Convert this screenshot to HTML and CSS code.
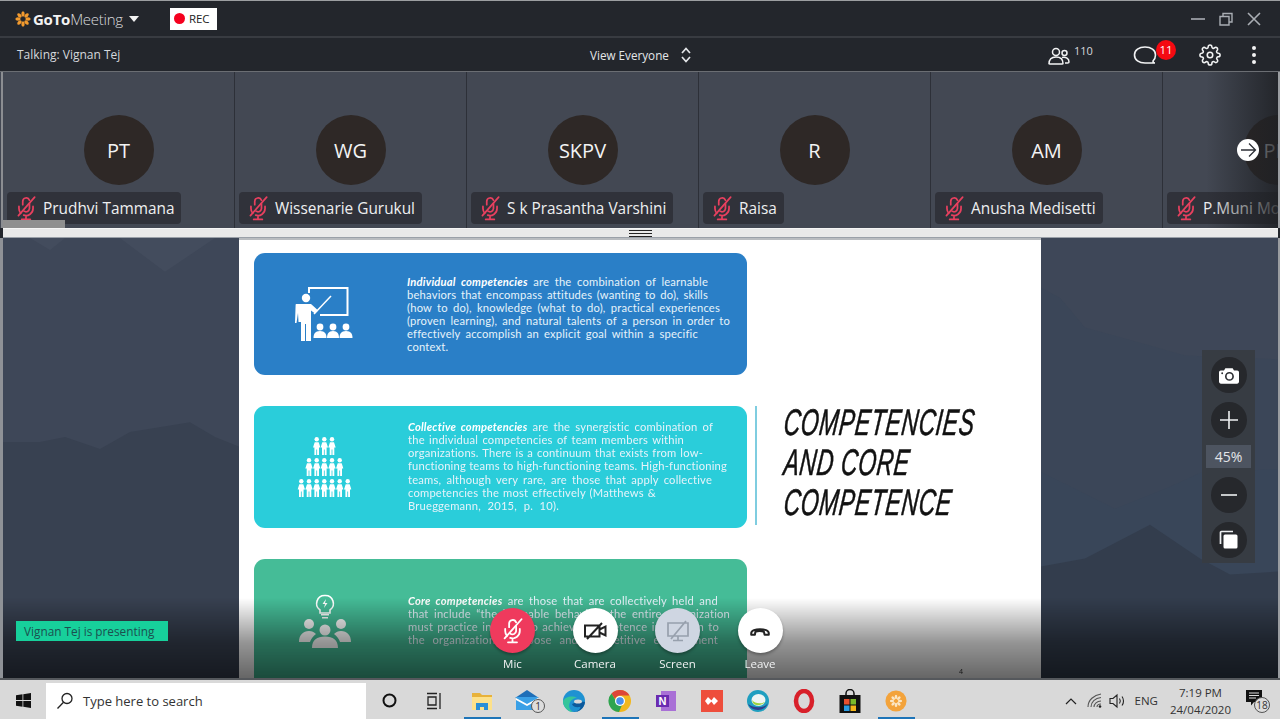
FILE: index.html
```html
<!DOCTYPE html>
<html lang="en">
<head>
<meta charset="utf-8">
<title>GoToMeeting</title>
<link rel="stylesheet" href="styles.css">
</head>
<body>
<svg class="defs" width="0" height="0" aria-hidden="true">
  <defs>
    <symbol id="micoff" viewBox="0 0 24 24">
      <g fill="none" stroke="currentColor" stroke-width="1.6" stroke-linecap="round">
        <path d="M9 9V6a3.2 3.2 0 0 1 6.2-1.2M15.2 8v4.500a3.2 3.2 0 0 1-5 2.400"/>
        <path d="M5.500 10.500v2a6.500 6.500 0 0 0 1.600 4.300M18.500 10.500v2a6.500 6.500 0 0 1-8.600 6.100M12 19v3M8 22.500h8"/>
        <path d="M5 19 20 2"/>
      </g>
    </symbol>
    <symbol id="flower" viewBox="0 0 24 24">
      <g fill="currentColor">
        <ellipse cx="12" cy="4.500" rx="2.500" ry="4"/>
        <ellipse cx="12" cy="19.500" rx="2.500" ry="4"/>
        <ellipse cx="4.500" cy="12" rx="4" ry="2.500"/>
        <ellipse cx="19.500" cy="12" rx="4" ry="2.500"/>
        <ellipse cx="6.700" cy="6.700" rx="2.500" ry="4" transform="rotate(-45 6.700 6.700)"/>
        <ellipse cx="17.300" cy="6.700" rx="2.500" ry="4" transform="rotate(45 17.300 6.700)"/>
        <ellipse cx="6.700" cy="17.300" rx="2.500" ry="4" transform="rotate(45 6.700 17.300)"/>
        <ellipse cx="17.300" cy="17.300" rx="2.500" ry="4" transform="rotate(-45 17.300 17.300)"/>
      </g>
    </symbol>
    <symbol id="person" viewBox="0 0 8 18">
      <circle cx="4" cy="2.300" r="2.200" fill="#fff"/>
      <path fill="#fff" d="M2 5.200h4l1.700 5.300H6.300V18H4.400v-5.500h-.8V18H1.700V10.500H.3z"/>
    </symbol>
  </defs>
</svg>

<div class="app">
  <header class="titlebar">
    <svg class="logo"><use href="#flower"/></svg>
    <span class="brand"><b>GoTo</b>Meeting</span>
    <span class="caret"></span>
    <span class="rec"><i class="rec-dot"></i>REC</span>
    <span class="winctl">
      <svg width="16" height="16" viewBox="0 0 16 16"><path d="M1 8h14" stroke="#a9adb3" stroke-width="1.6"/></svg>
      <svg width="16" height="16" viewBox="0 0 16 16" fill="none" stroke="#a9adb3" stroke-width="1.4"><path d="M2 5.500h9v8.500H2zM5 5.500V2.500h9V11h-3"/></svg>
      <svg width="16" height="16" viewBox="0 0 16 16"><path d="M2 2l12 12M14 2 2 14" stroke="#a9adb3" stroke-width="1.6"/></svg>
    </span>
  </header>

  <div class="subbar">
    <span class="talking">Talking: Vignan Tej</span>
    <span class="view">View Everyone
      <svg width="12" height="18" viewBox="0 0 12 18" fill="none" stroke="#e4e6e9" stroke-width="1.7"><path d="M2 7l4-4.500L10 7M2 11l4 4.500 4-4.500"/></svg>
    </span>
    <span class="people">
      <svg width="22" height="18" viewBox="0 0 22 18" fill="none" stroke="#f2f3f4" stroke-width="1.5"><circle cx="8" cy="5" r="3.500"/><circle cx="16.500" cy="6" r="2.500"/><path d="M1 17c0-5 3-7 7-7s7 2 7 6.500c0 .5-.3.5-1 .5H2c-.6 0-1 0-1-.5zM14 10.500c4-.8 7 1 7 4.500 0 1-.5 1-1.500 1H17"/></svg>
      <sup>110</sup>
    </span>
    <span class="chat">
      <svg width="24" height="20" viewBox="0 0 24 20" fill="none" stroke="#f2f3f4" stroke-width="1.6"><path d="M20 16c1.500-1.500 2.500-3.500 2.500-6C22.500 5 18 2 12 2S1.500 5 1.500 10s4.500 8 10.500 8h10c-1 0-2-.7-2-2z"/></svg>
      <b class="badge">11</b>
    </span>
    <svg class="gear" width="22" height="22" viewBox="0 0 24 24" fill="none" stroke="#f2f3f4" stroke-width="1.700" stroke-linejoin="round"><circle cx="12" cy="12" r="3"/><path d="M19.400 15a1.650 1.650 0 0 0 .33 1.820l.06.06a2 2 0 0 1 0 2.830 2 2 0 0 1-2.830 0l-.06-.06a1.650 1.650 0 0 0-1.820-.33 1.650 1.650 0 0 0-1 1.510V21a2 2 0 0 1-2 2 2 2 0 0 1-2-2v-.09A1.650 1.650 0 0 0 9 19.400a1.650 1.650 0 0 0-1.820.33l-.06.06a2 2 0 0 1-2.830 0 2 2 0 0 1 0-2.830l.06-.06a1.650 1.650 0 0 0 .33-1.820 1.650 1.650 0 0 0-1.510-1H3a2 2 0 0 1-2-2 2 2 0 0 1 2-2h.09A1.650 1.650 0 0 0 4.600 9a1.650 1.650 0 0 0-.33-1.820l-.06-.06a2 2 0 0 1 0-2.830 2 2 0 0 1 2.830 0l.06.06a1.650 1.650 0 0 0 1.820.33H9a1.650 1.650 0 0 0 1-1.510V3a2 2 0 0 1 2-2 2 2 0 0 1 2 2v.09a1.650 1.650 0 0 0 1 1.510 1.650 1.650 0 0 0 1.820-.33l.06-.06a2 2 0 0 1 2.830 0 2 2 0 0 1 0 2.830l-.06.06a1.650 1.650 0 0 0-.33 1.820V9a1.650 1.650 0 0 0 1.510 1H21a2 2 0 0 1 2 2 2 2 0 0 1-2 2h-.09a1.650 1.650 0 0 0-1.510 1z"/></svg>
    <span class="kebab"><i></i><i></i><i></i></span>
  </div>

  <section class="strip">
    <article class="tile"><div class="avatar">PT</div><div class="nametag"><svg class="mic"><use href="#micoff"/></svg>Prudhvi Tammana</div></article>
    <article class="tile"><div class="avatar">WG</div><div class="nametag"><svg class="mic"><use href="#micoff"/></svg>Wissenarie Gurukul</div></article>
    <article class="tile"><div class="avatar">SKPV</div><div class="nametag"><svg class="mic"><use href="#micoff"/></svg>S k Prasantha Varshini</div></article>
    <article class="tile"><div class="avatar">R</div><div class="nametag"><svg class="mic"><use href="#micoff"/></svg>Raisa</div></article>
    <article class="tile"><div class="avatar">AM</div><div class="nametag"><svg class="mic"><use href="#micoff"/></svg>Anusha Medisetti</div></article>
    <article class="tile"><div class="avatar">PM</div><div class="nametag"><svg class="mic"><use href="#micoff"/></svg>P.Muni Mohan</div></article>
    <div class="fade"></div>
    <div class="next"><svg width="20" height="20" viewBox="0 0 20 20" fill="none" stroke="#2c2f36" stroke-width="1.300"><path d="M3 10h14M11 3.500 17.500 10 11 16.500"/></svg></div>
    <div class="thumb"></div>
  </section>

  <div class="splitter"><span class="grip"></span></div>

  <main class="stage">
    <svg class="mountains" viewBox="0 0 1280 442" preserveAspectRatio="none" aria-hidden="true">
      <rect width="1280" height="442" fill="#3e4758"/>
      <path d="M30 0 50 12 65 0ZM120 0 165 34 215 0Z" fill="#434c5d"/>
      <path d="M0 205 40 205 65 200 100 212 130 195 190 185 215 200 240 210V442H0Z" fill="#384151"/>
      <path d="M1041 50 1060 60 1085 90 1150 108 1185 118 1280 122V442H1041Z" fill="#3b4658"/>
      <path d="M1041 235 1115 272 1170 250 1200 236 1280 232V442H1041Z" fill="#394659"/>
      <path d="M1041 330 1085 322 1150 288 1200 322 1230 338 1280 335V442H1041Z" fill="#333d4d"/>
    </svg>
    <div class="slide">
      <div class="cards">
        <div class="card card-blue">
          <div class="card-icon">
            <svg width="60" height="54" viewBox="0 0 60 54" fill="#fff">
              <path fill="none" stroke="#fff" stroke-width="2" d="M14 6V1h38.500v27H25"/>
              <path fill="none" stroke="#fff" stroke-width="1.500" d="M19 27 36 9"/>
              <circle cx="11" cy="11" r="4.200"/>
              <path d="M1 17h15l5 4.500 2 2-3 3-4-3V54h-5V37h-1v17H6V35H3.500L3 26 1.500 36H0l.500-15C.7 18 .500 17 1 17z"/>
              <circle cx="25" cy="40" r="3.400"/><path d="M18.500 51c0-4 1.500-7 6.500-7s6.500 3 6.500 7z"/>
              <circle cx="38" cy="40" r="3.400"/><path d="M32 51c0-4 1.500-7 6-7s6 3 6 7z"/>
              <circle cx="51" cy="40" r="3.400"/><path d="M44.500 51c0-4 1.500-7 6.500-7s6.500 3 6.500 7z"/>
            </svg>
          </div>
          <p class="card-text"><span class="ln"><b>Individual competencies</b> are the combination of learnable</span><span class="ln">behaviors that encompass attitudes (wanting to do), skills</span><span class="ln">(how to do), knowledge (what to do), practical experiences</span><span class="ln">(proven learning), and natural talents of a person in order to</span><span class="ln">effectively accomplish an explicit goal within a specific</span><span class="ln">context.</span></p>
        </div>
        <div class="card card-cyan">
          <div class="card-icon">
            <svg width="56" height="62" viewBox="0 0 56 62">
              <use href="#person" x="15.700" y="2" width="8" height="18"/><use href="#person" x="23.300" y="2" width="8" height="18"/><use href="#person" x="31" y="2" width="8" height="18"/>
              <use href="#person" x="8" y="23" width="8" height="18"/><use href="#person" x="15.700" y="23" width="8" height="18"/><use href="#person" x="23.300" y="23" width="8" height="18"/><use href="#person" x="31" y="23" width="8" height="18"/><use href="#person" x="38.700" y="23" width="8" height="18"/>
              <use href="#person" x="0.300" y="44" width="8" height="18"/><use href="#person" x="8" y="44" width="8" height="18"/><use href="#person" x="15.700" y="44" width="8" height="18"/><use href="#person" x="23.300" y="44" width="8" height="18"/><use href="#person" x="31" y="44" width="8" height="18"/><use href="#person" x="38.700" y="44" width="8" height="18"/><use href="#person" x="46.700" y="44" width="8" height="18"/>
            </svg>
          </div>
          <p class="card-text"><span class="ln"><b>Collective competencies</b> are the synergistic combination of</span><span class="ln">the individual competencies of team members within</span><span class="ln">organizations. There is a continuum that exists from low-</span><span class="ln">functioning teams to high-functioning teams. High-functioning</span><span class="ln">teams, although very rare, are those that apply collective</span><span class="ln">competencies the most effectively (Matthews &amp;</span><span class="ln">Brueggemann, 2015, p. 10).</span></p>
        </div>
        <div class="card card-green">
          <div class="card-icon">
            <svg width="52" height="54" viewBox="0 0 52 54" fill="#fff">
              <path fill="none" stroke="#fff" stroke-width="1.600" d="M26 1.500a8 8 0 0 0-5 14.500v3h10v-3A8 8 0 0 0 26 1.500z"/>
              <path d="M27 5l-3.500 5H26l-1 4 3.500-5H26zM22 20h8v1.500h-8zM23 23h6v1.500h-6z"/>
              <circle cx="10" cy="30" r="5"/><circle cx="42" cy="30" r="5"/><circle cx="26" cy="36" r="5.500"/>
              <path d="M0 48c0-7 4-11 10-11 3 0 5 1 7 3-3 2-5 5-6 8zM52 48c0-7-4-11-10-11-3 0-5 1-7 3 3 2 5 5 6 8zM13 54c0-8 5-11.500 13-11.500S39 46 39 54z"/>
            </svg>
          </div>
          <p class="card-text"><span class="ln"><b>Core competencies</b> are those that are collectively held and</span><span class="ln">that include “the learnable behaviors the entire organization</span><span class="ln">must practice in order to achieve competence in relation to</span><span class="ln">the organization’s purpose and competitive environment</span></p>
        </div>
      </div>
      <h1 class="slide-title"><span>COMPETENCIES</span><span>AND CORE</span><span>COMPETENCE</span></h1>
      <span class="page-no">4</span>
    </div>

    <div class="shade"></div>
    <div class="presenting">Vignan Tej is presenting</div>

    <div class="controls">
      <div class="ctl"><span class="btn btn-mic"><svg width="27" height="27" color="#fff"><use href="#micoff"/></svg></span><label>Mic</label></div>
      <div class="ctl"><span class="btn"><svg width="26" height="26" viewBox="0 0 26 26" fill="none" stroke="#222" stroke-width="2"><path d="M3 7.500h14.500v11H3zM17.500 11.500l6-3v9l-6-3M5 21 20 5"/></svg></span><label>Camera</label></div>
      <div class="ctl"><span class="btn btn-screen"><svg width="26" height="26" viewBox="0 0 26 26" fill="none" stroke="#97a0ad" stroke-width="1.700"><path d="M3 5h20v13H3zM13 18v4M8 22.500h10M6 21 21 3"/></svg></span><label>Screen</label></div>
      <div class="ctl"><span class="btn"><svg width="24" height="24" viewBox="0 0 26 26" fill="none" stroke="#222" stroke-width="2.200" stroke-linejoin="round"><path d="M3.500 15.500c0-6 19-6 19 0v1.500h-4.500l-.8-3.200c-2.500-.8-6.700-.8-9.200 0L7.500 17H3.500z"/></svg></span><label>Leave</label></div>
    </div>

    <div class="zoompanel">
      <span class="zbtn"><svg width="20" height="17" viewBox="0 0 22 18"><path fill="#fff" d="M7 1h8l1.500 2.500H20a2 2 0 0 1 2 2V16a2 2 0 0 1-2 2H2a2 2 0 0 1-2-2V5.500a2 2 0 0 1 2-2h3.500z"/><circle cx="11.500" cy="10" r="4" fill="none" stroke="#2b2d31" stroke-width="1.800"/><circle cx="3.500" cy="6.500" r="1" fill="#2b2d31"/></svg></span>
      <span class="zbtn"><svg width="20" height="20" viewBox="0 0 20 20"><path d="M10 1v18M1 10h18" stroke="#eef0f2" stroke-width="1.600"/></svg></span>
      <span class="zlabel">45%</span>
      <span class="zbtn"><svg width="20" height="20" viewBox="0 0 20 20"><path d="M2 10h16" stroke="#eef0f2" stroke-width="1.600"/></svg></span>
      <span class="zbtn"><svg width="20" height="20" viewBox="0 0 20 20"><path d="M1.500 14V2.500a1 1 0 0 1 1-1H14" fill="none" stroke="#eef0f2" stroke-width="1.700"/><rect x="4.500" y="4.500" width="14" height="14" rx="1.500" fill="#fff"/></svg></span>
    </div>
  </main>
</div>

<footer class="taskbar">
  <span class="start"><svg width="15" height="15" viewBox="0 0 15 15" fill="#111"><path d="M0 2.200 6.500 1.300V7H0zM7.300 1.200 15 0v7H7.300zM0 8h6.500v5.700L0 12.800zM7.300 8H15v7l-7.700-1.200z"/></svg></span>
  <span class="search"><svg width="18" height="18" viewBox="0 0 18 18" fill="none" stroke="#222" stroke-width="1.300"><circle cx="11" cy="6.500" r="5"/><path d="M7.500 10.200 1.500 16.500"/></svg>Type here to search</span>
  <span class="tb-sys"><svg width="15" height="15" viewBox="0 0 15 15"><circle cx="7.500" cy="7.500" r="6" fill="none" stroke="#111" stroke-width="2"/></svg></span>
  <span class="tb-sys tb-view"><svg width="18" height="18" viewBox="0 0 18 18" fill="none" stroke="#222" stroke-width="1.300"><path d="M2 1.500h10M2 16.500h10M3 5h8v8H3zM15 1v16"/></svg></span>
  <span class="tb-app on"><svg width="24" height="22" viewBox="0 0 24 22"><path fill="#e8b23a" d="M2 3h8l2 2h10v15H2z"/><path fill="#fde18a" d="M2 7h20v13H2z"/><path fill="#2a8fd6" d="M6 20v-7h12v7h-4v-3h-4v3z"/></svg></span>
  <span class="tb-app"><svg width="26" height="24" viewBox="0 0 26 24"><path fill="#1f6fb8" d="M12 1 24 9H0z"/><path fill="#3aa0e6" d="M1 8h22v13H1z"/><path fill="#fff" d="M1 9l11 6 11-6v2l-11 6-11-6z"/></svg><i class="tb-count">1</i></span>
  <span class="tb-app"><svg width="24" height="24" viewBox="0 0 24 24"><circle cx="12" cy="12" r="11" fill="#1f92d2"/><path fill="#0d5a9c" d="M23 13a11 11 0 0 1-13 9.800c3 .7 8-1 8.500-5C15 19 11 18 10 15c2-1 9-3 13-2z"/><path fill="#35c59a" d="M1 12c0 6 5 11 10 11-3-2-4.500-5-3.500-8.500C8.500 11 12 9 15 9c-5-3-12-1-14 3z"/><ellipse cx="16" cy="12.500" rx="4" ry="2" fill="#d9d9d9"/></svg></span>
  <span class="tb-app on"><svg width="24" height="24" viewBox="0 0 24 24"><circle cx="12" cy="12" r="11" fill="#f2b71c"/><path fill="#dd4538" d="M12 1a11 11 0 0 1 9.500 5.500H12a5.500 5.500 0 0 0-5 3.500L3.500 4.500A11 11 0 0 1 12 1z"/><path fill="#2ea44f" d="M3.500 4.500 8 12a5 5 0 0 0 6 4l-3 7A11 11 0 0 1 3.500 4.500z"/><circle cx="12" cy="12" r="5" fill="#fff"/><circle cx="12" cy="12" r="3.800" fill="#4a8fe8"/></svg></span>
  <span class="tb-app"><svg width="22" height="22" viewBox="0 0 22 22"><rect x="6" y="1" width="15" height="20" fill="#a970d6"/><rect x="1" y="5" width="13" height="12" fill="#6a2bb0"/><text class="onenote" x="7.500" y="15">N</text></svg></span>
  <span class="tb-app"><svg width="24" height="24" viewBox="0 0 24 24"><rect x="1" y="1" width="22" height="22" fill="#ee4e3c"/><path fill="#fff" d="M8 8l4 4-4 4-3-4zM14 8l4 4-4 4-3-4z"/></svg></span>
  <span class="tb-app"><svg width="24" height="24" viewBox="0 0 24 24"><circle cx="12" cy="12" r="11" fill="#1f9fc0"/><path fill="#2d3f8f" d="M2 15a11 11 0 0 0 20-1c-3 5-13 6-20 1z"/><ellipse cx="12.500" cy="11" rx="7" ry="6" fill="#eef5f4"/><path fill="#9bd23c" d="M6 11c3 4 9 4 13 2-2 3-9 5-12 1z"/></svg></span>
  <span class="tb-app"><svg width="22" height="24" viewBox="0 0 22 24"><ellipse cx="11" cy="12" rx="8" ry="10" fill="none" stroke="#d8202a" stroke-width="4.500"/></svg></span>
  <span class="tb-app"><svg width="22" height="24" viewBox="0 0 22 24"><rect x="0.500" y="6" width="21" height="18" fill="#111"/><path d="M7 8V4.500a4 4 0 0 1 8 0V8" fill="none" stroke="#111" stroke-width="1.500"/><rect x="5" y="10" width="5.500" height="5.500" fill="#e9502e"/><rect x="11.500" y="10" width="5.500" height="5.500" fill="#7bbb2a"/><rect x="5" y="16.500" width="5.500" height="5.500" fill="#2a9be0"/><rect x="11.500" y="16.500" width="5.500" height="5.500" fill="#f5b719"/></svg></span>
  <span class="tb-app on"><svg width="22" height="24" viewBox="0 0 24 24"><circle cx="12" cy="12" r="11.500" fill="#f3a33b"/><svg x="5" y="5" width="14" height="14" color="#fbe6c4"><use href="#flower"/></svg></svg></span>

  <span class="tray">
    <svg width="14" height="14" viewBox="0 0 14 14" fill="none" stroke="#222" stroke-width="1.200"><path d="M2 10l5-5 5 5"/></svg>
    <svg class="t-wifi" width="16" height="16" viewBox="0 0 16 16" fill="none" stroke="#555" stroke-width="1.100"><path d="M1 14C1 7 7 2 14 1M4 14c0-5 4-9 10-9.500M7 14c0-3 3-6 7-6M10 14c0-2 1.500-3 4-3"/><circle cx="13" cy="13.500" r="1.300" fill="#222" stroke="none"/></svg>
    <svg class="t-vol" width="18" height="16" viewBox="0 0 18 16" fill="none" stroke="#222" stroke-width="1.100"><path d="M1 5.500h3L8 2v12l-4-3.500H1zM10.500 5.500c1 1.500 1 3.500 0 5M13 3.500c2 2.500 2 6.500 0 9"/></svg>
    <span class="eng">ENG</span>
    <span class="clock"><span>7:19 PM</span><span>24/04/2020</span></span>
    <span class="notif"><svg width="17" height="16" viewBox="0 0 17 16" fill="#111"><path d="M0 0h16v12H8l-3 3.500V12H0z"/><path d="M3 3h10M3 5.500h10M3 8h7" stroke="#ddd" stroke-width="1"/></svg><i class="notif-count">18</i></span>
  </span>
</footer>
</body>
</html>
```

FILE: styles.css
```css
* { box-sizing: border-box; }
html, body { margin: 0; padding: 0; height: 719px; overflow: hidden; background: #d9d9d9; }
body { font-family: "Open Sans", "Noto Sans", sans-serif; color: #fff; display: flex; flex-direction: column; }
.defs { position: absolute; }

.app { height: 680px; display: flex; flex-direction: column; background: #23262c; border-top: 1px solid #9c9ea1; border-bottom: 2px solid #55585c; overflow: hidden; flex: none; }

/* title bar */
.titlebar { height: 37px; flex: none; display: flex; align-items: center; padding: 0 15px; background: #23262c; border-bottom: 2px solid #383b41; }
.logo { width: 16px; height: 16px; color: #f29a2e; flex: none; }
.brand { margin-left: 2px; font-size: 15px; letter-spacing: -.25px; color: #d9dadc; font-weight: 300; }
.brand b { font-weight: 700; color: #f3f3f3; }
.caret { margin-left: 6px; width: 0; height: 0; border-left: 5.500px solid transparent; border-right: 5.500px solid transparent; border-top: 6px solid #f2f2f2; }
.rec { margin-left: 31px; width: 47px; height: 22px; background: #fff; display: flex; align-items: center; color: #222; font-size: 11.500px; padding-left: 4px; gap: 4px; }
.rec-dot { width: 11px; height: 11px; border-radius: 50%; background: #f5001e; }
.winctl { margin-left: auto; margin-right: 3px; display: flex; gap: 12px; align-items: center; }

/* sub bar */
.subbar { height: 34px; flex: none; display: flex; align-items: center; padding: 0 17px; background: #23262c; border-bottom: 1px solid #6b6e73; }
.talking { font-size: 12px; color: #d5d8dc; width: 573px; flex: none; }
.view { font-size: 11.700px; color: #e4e6e9; display: flex; align-items: center; gap: 11px; width: 458px; flex: none; }
.people { display: flex; align-items: flex-start; gap: 4px; width: 85px; flex: none; }
.people sup { font-size: 11px; line-height: 11px; color: #d5d8dc; margin-top: 0; }
.people svg { margin-top: 2px; }
.chat { position: relative; width: 66px; flex: none; display: flex; }
.badge { position: absolute; left: 23px; top: -5px; width: 20px; height: 20px; border-radius: 50%; background: #f50a12; font-weight: 400; font-size: 11.500px; line-height: 19px; text-align: center; }
.gear { flex: none; }
.kebab { margin-left: 31px; display: flex; flex-direction: column; gap: 3px; }
.kebab i { width: 4px; height: 4px; border-radius: 50%; background: #f2f3f4; }

/* participants */
.strip { height: 156px; flex: none; display: flex; position: relative; overflow: hidden; background: #434853; padding-left: 3px; border-right: 2px solid #9a9da1; }
.strip::before { content: ""; position: absolute; left: 1px; top: 0; bottom: 0; width: 2px; background: #8c8e92; z-index: 1; }
.tile { width: 232px; flex: none; height: 156px; display: flex; flex-direction: column; align-items: center; padding-top: 43px; background: #434853; border-right: 1px solid #2d3038; position: relative; }
.avatar { width: 70px; height: 70px; border-radius: 50%; background: #2e2826; color: #f3f3f3; display: flex; align-items: center; justify-content: center; font-size: 20px; padding-top: 1px; }
.nametag { position: absolute; left: 4px; top: 120px; height: 32px; padding: 0 7px 0 6px; display: flex; align-items: center; gap: 4px; background: #30323a; border-radius: 4px; font-size: 15.400px; font-weight: 500; color: #eeeff0; white-space: nowrap; }
.mic { width: 26px; height: 26px; color: #e8405f; flex: none; }
.fade { position: absolute; right: 0; top: 0; bottom: 0; width: 72px; background: linear-gradient(90deg, rgba(35,37,42,0), rgba(30,32,36,.85)); }
.next { position: absolute; left: 1237px; top: 67px; width: 22px; height: 22px; border-radius: 50%; background: #fff; display: flex; align-items: center; justify-content: center; }
.thumb { position: absolute; left: 3px; top: 148px; width: 62px; height: 8px; background: #8f8f8f; }

.splitter { height: 10px; flex: none; background: #e9e9e9; border-top: 1px solid #f5f5f5; border-bottom: 1px solid #9aa0a8; display: flex; align-items: center; justify-content: center; margin: 0 2px 0 3px; }
.grip { width: 23px; height: 7px; border-top: 1px solid #222; border-bottom: 1px solid #222; position: relative; }
.grip::after { content: ""; position: absolute; left: 0; right: 0; top: 2px; height: 1px; background: #222; }

/* stage */
.stage { position: relative; flex: 1; display: flex; justify-content: center; overflow: hidden; background: #3e4758; border-left: 3px solid #8f9297; border-right: 2px solid #9a9da1; padding-right: 1px; }
.mountains { position: absolute; left: -3px; top: 0; width: 1280px; height: 100%; }
.slide { position: relative; width: 802px; height: 100%; flex: none; background: #fff; display: flex; padding: 13px 0 0 15px; border-top: 2px solid #b9bcc0; filter: blur(.35px); color: #111; }
.cards { width: 493px; flex: none; display: flex; flex-direction: column; gap: 31px; }
.card { height: 122px; flex: none; border-radius: 11px; display: flex; align-items: center; }
.card-blue { background: #2a7fc7; }
.card-cyan { background: #2acdda; padding-bottom: 2px; }
.card-green { background: #45bc97; height: 130px; align-items: flex-start; padding-top: 35px; }
.card-icon { width: 153px; flex: none; display: flex; justify-content: center; padding-right: 11px; }
.card-text { margin: 0; font-family: "Lato", sans-serif; font-size: 11.200px; line-height: 13.100px; color: #e6f3fa; letter-spacing: .2px; }
.card-cyan .card-text, .card-green .card-text { padding-left: 1px; }
.ln { display: block; white-space: nowrap; text-align: justify; text-align-last: justify; }
.card-text b { font-style: italic; color: #fff; font-weight: 700; }

/* line measures of the slide's paragraphs */
.card-blue .ln:nth-child(1) { width: 301px; }
.card-blue .ln:nth-child(2) { width: 301px; }
.card-blue .ln:nth-child(3) { width: 313px; }
.card-blue .ln:nth-child(4) { width: 323px; }
.card-blue .ln:nth-child(5) { width: 291px; }
.card-blue .ln:nth-child(6) { width: 40px; }
.card-cyan .ln:nth-child(1) { width: 305px; }
.card-cyan .ln:nth-child(2) { width: 276px; }
.card-cyan .ln:nth-child(3) { width: 295px; }
.card-cyan .ln:nth-child(4) { width: 319px; }
.card-cyan .ln:nth-child(5) { width: 304px; }
.card-cyan .ln:nth-child(6) { width: 248px; }
.card-cyan .ln:nth-child(7) { width: 151px; }
.card-green .ln:nth-child(1) { width: 310px; }
.card-green .ln:nth-child(2) { width: 322px; }
.card-green .ln:nth-child(3) { width: 311px; }
.card-green .ln:nth-child(4) { width: 310px; }

.slide-title { margin: 153px 0 0 8px; padding-left: 27px; border-left: 2px solid #7fcde0; height: 119px; font-family: "Liberation Sans", sans-serif; font-weight: 400; font-style: italic; font-size: 37px; line-height: 40px; letter-spacing: 1px; -webkit-text-stroke: .6px #111; color: #111; white-space: nowrap; }
.slide-title span { display: block; transform-origin: left center; transform: translateY(-3px) scaleX(.62) skewX(-10deg); }
.page-no { position: absolute; left: 720px; top: 427px; font-size: 7px; color: #333; }

.shade { position: absolute; left: -3px; right: -2px; bottom: 0; height: 80px; background: linear-gradient(180deg, rgba(0,0,0,0), rgba(0,0,0,.2) 26%, rgba(0,0,0,.42) 56%, rgba(0,0,0,.6)); }
.presenting { position: absolute; left: 13px; top: 383px; width: 152px; height: 20px; background: #17d09b; color: #1c4f4f; font-size: 11.800px; line-height: 20px; padding-left: 8px; }

.controls { position: absolute; left: 487px; top: 370px; display: flex; gap: 37.500px; }
.ctl { width: 45px; display: flex; flex-direction: column; align-items: center; }
.btn { width: 45px; height: 45px; border-radius: 50%; background: #fff; display: flex; align-items: center; justify-content: center; box-shadow: 0 2px 3px rgba(0,0,0,.3); }
.btn-mic { background: #ef3a5d; }
.btn-screen { background: #cfd6e2; }
.ctl label { margin-top: 3px; font-size: 11.500px; line-height: 16px; color: #f0f1f2; white-space: nowrap; }

.zoompanel { position: absolute; left: 1199px; top: 112px; width: 53px; height: 213px; background: #373c43; display: flex; flex-direction: column; align-items: center; padding-top: 7px; }
.zbtn { width: 36px; height: 36px; border-radius: 50%; background: #26282c; display: flex; align-items: center; justify-content: center; flex: none; margin-bottom: 9px; }
.zlabel { width: 45px; height: 23px; background: #4d5460; font-size: 14px; line-height: 23px; text-align: center; color: #e4e6e9; margin: -2px 0 9px; }

/* taskbar */
.taskbar { height: 39px; flex: none; display: flex; align-items: center; background: #d9d9d9; padding-top: 2px; color: #111; }
.start { width: 46px; flex: none; display: flex; justify-content: center; }
.search { width: 320px; height: 37px; flex: none; background: #fff; display: flex; align-items: center; gap: 9px; padding-left: 10px; font-size: 13px; color: #333; margin-top: 1px; }
.tb-sys { width: 47px; flex: none; display: flex; justify-content: center; }
.tb-view { width: 46px; padding-right: 4px; }
.tb-app { width: 46px; height: 37px; flex: none; display: flex; align-items: center; justify-content: center; position: relative; }
.tb-app.on::after { content: ""; position: absolute; left: 5px; right: 4px; bottom: 0; height: 2px; background: #1d74b8; }
.tb-count { position: absolute; left: 26px; top: 17px; width: 14px; height: 14px; border-radius: 50%; border: 1px solid #555; font-size: 10px; line-height: 12px; text-align: center; font-style: normal; background: #ddd; color: #333; }
.onenote { font-family: "Liberation Sans", sans-serif; font-weight: 700; font-size: 11px; fill: #fff; text-anchor: middle; }
.tray { margin-left: auto; display: flex; align-items: center; padding-right: 12px; font-size: 12px; color: #333; }
.t-wifi { margin-left: 9px; }
.t-vol { margin-left: 6px; }
.eng { margin-left: 8px; font-size: 11.500px; }
.clock { margin-left: 12px; display: flex; flex-direction: column; align-items: center; line-height: 17px; font-size: 11.500px; }
.notif { position: relative; margin-left: 15px; width: 22px; height: 22px; display: block; }
.notif-count { position: absolute; left: 8px; top: 7px; width: 16px; height: 16px; border-radius: 50%; border: 1px solid #555; background: #ddd; font-style: normal; font-size: 10px; line-height: 14px; text-align: center; }
```
